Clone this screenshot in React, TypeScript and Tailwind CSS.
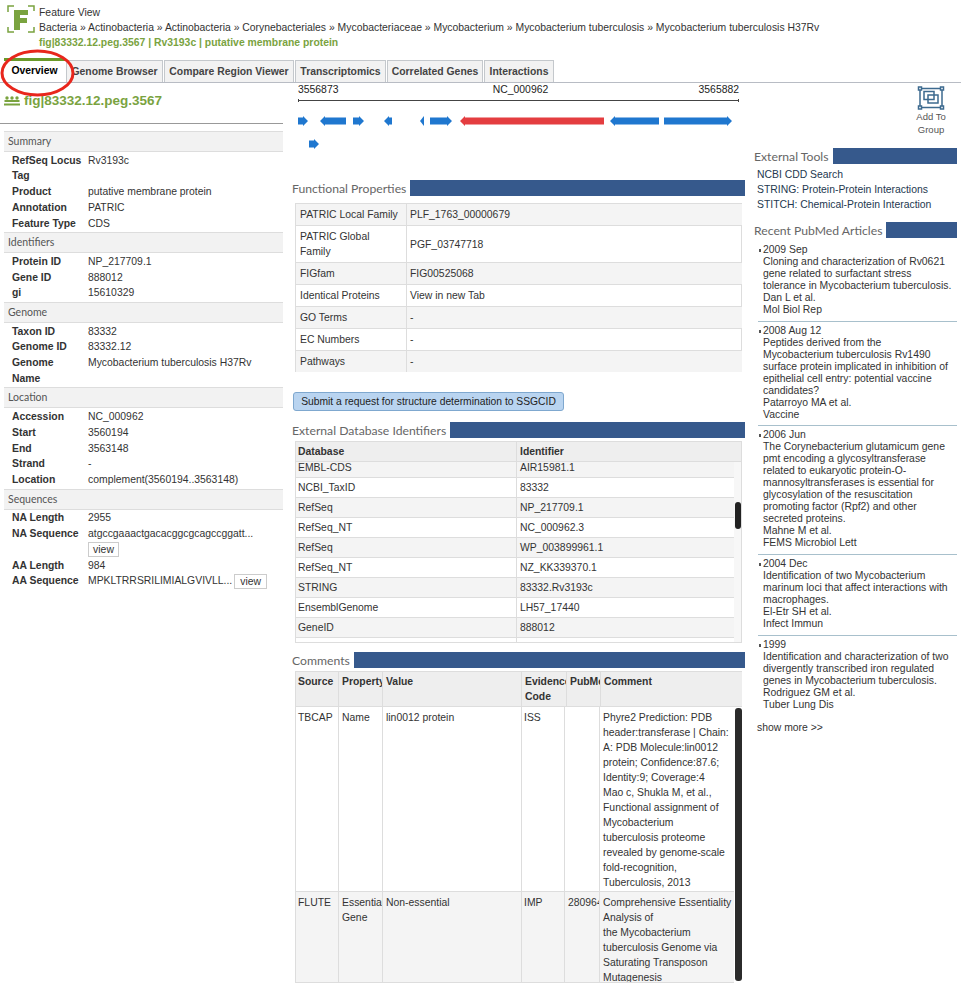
const sans = "font-['Liberation_Sans',Arial,sans-serif]"

// Section label followed by the blue bar that fills the rest of the row
function Heading({ title, className = "" }: { title: string; className?: string }) {
    return (
        <div className={`flex items-stretch h-4 gap-[4px] ${className}`}>
            <span className="pl-[2px] font-['Lato',sans-serif] text-[12.2px] leading-[17px] text-[#666] whitespace-nowrap">{title}</span>
            <div className="flex-1 bg-[#36598c]" />
        </div>
    )
}

const summary: { title: string; rows: [string, string][] }[] = [
    {
        title: "Summary",
        rows: [
            ["RefSeq Locus Tag", "Rv3193c"],
            ["Product", "putative membrane protein"],
            ["Annotation", "PATRIC"],
            ["Feature Type", "CDS"],
        ],
    },
    {
        title: "Identifiers",
        rows: [
            ["Protein ID", "NP_217709.1"],
            ["Gene ID", "888012"],
            ["gi", "15610329"],
        ],
    },
    {
        title: "Genome",
        rows: [
            ["Taxon ID", "83332"],
            ["Genome ID", "83332.12"],
            ["Genome Name", "Mycobacterium tuberculosis H37Rv"],
        ],
    },
    {
        title: "Location",
        rows: [
            ["Accession", "NC_000962"],
            ["Start", "3560194"],
            ["End", "3563148"],
            ["Strand", "-"],
            ["Location", "complement(3560194..3563148)"],
        ],
    },
]

function ViewButton({ className }: { className: string }) {
    return (
        <button className={`h-[15px] border border-[#ccc] bg-white text-[10.4px] leading-[13px] text-[#333] ${className}`}>
            view
        </button>
    )
}

function SectionBand({ title }: { title: string }) {
    return (
        <div className="h-[21px] bg-[#f2f2f2] border-y border-[#ddd] pl-[4px] font-['Lato',sans-serif] text-[10.5px] leading-[19px] text-[#555]">
            {title}
        </div>
    )
}

function Row({ k, v }: { k: string; v: string }) {
    return (
        <div className="flex text-[10.4px] leading-[15.75px] text-[#333]">
            <dt className="w-[84px] pl-2 shrink-0 font-bold pr-1">{k}</dt>
            <dd className="whitespace-nowrap">{v}</dd>
        </div>
    )
}

function LeftPanel() {
    return (
        <aside className="w-[279px] shrink-0 ml-1">
            <div className="flex items-center h-[41px] border-b border-[#999] pb-[4px] -ml-1 w-[283px] pl-1 gap-[4px]">
                <svg width="16" height="10" viewBox="0 0 16 10" className="text-[#7aa33f]" fill="currentColor">
                    <circle cx="3" cy="2" r="1.7" />
                    <circle cx="8" cy="2" r="1.7" />
                    <circle cx="13" cy="2" r="1.7" />
                    <rect x="0.5" y="4" width="15" height="2" />
                    <rect x="0" y="7.5" width="16" height="2" />
                </svg>
                <span className="text-[13.5px] font-bold text-[#7aa33f]">fig|83332.12.peg.3567</span>
            </div>
            <div className="mt-[7px]">
                {summary.map(s => (
                    <section key={s.title}>
                        <SectionBand title={s.title} />
                        <dl className="pt-[0.6px] pb-[0.9px]">
                            {s.rows.map(([k, v]) => (
                                <Row key={k} k={k} v={v} />
                            ))}
                        </dl>
                    </section>
                ))}
                <SectionBand title="Sequences" />
                <dl className="pt-[0.6px]">
                    <Row k="NA Length" v="2955" />
                    <Row k="NA Sequence" v="atgccgaaactgacacggcgcagccggatt..." />
                    <div className="pl-[84px] h-[15.75px] flex items-center">
                        <ViewButton className="w-[31px]" />
                    </div>
                    <Row k="AA Length" v="984" />
                    <div className="flex items-center text-[10.4px] leading-[15.75px] text-[#333]">
                        <div className="w-[84px] pl-2 shrink-0 font-bold">AA Sequence</div>
                        <div className="whitespace-nowrap mr-[2px]">MPKLTRRSRILIMIALGVIVLL...</div>
                        <ViewButton className="w-[33px]" />
                    </div>
                </dl>
            </div>
        </aside>
    )
}

// Gene arrows on the compare region track, x and width measured from the track's left edge
const arrows: { l: number; w: number; dir: "r" | "l"; red?: boolean }[] = [
    { l: 0, w: 10, dir: "r" },
    { l: 22, w: 26, dir: "l" },
    { l: 55, w: 11, dir: "r" },
    { l: 86, w: 8, dir: "l" },
    { l: 122, w: 4, dir: "l" },
    { l: 132, w: 22, dir: "r" },
    { l: 162, w: 144, dir: "l", red: true },
    { l: 312, w: 49, dir: "l" },
    { l: 366, w: 68, dir: "r" },
]

function Track() {
    return (
        <div className="ml-[8px] mr-[6px]">
            <div className="flex justify-between text-[10.4px] leading-3 text-[#222] h-3 mt-[1px]">
                <span>3556873</span>
                <span className="translate-x-[2px]">NC_000962</span>
                <span>3565882</span>
            </div>
            <div className="mt-[3px] h-[3px] border-x border-[#444] flex items-center">
                <div className="h-px w-full bg-[#444]" />
            </div>
            <svg width="440" height="48" viewBox="0 0 440 48" className="mt-[13px] block">
                {arrows.map(a => {
                    const h = 3.5
                    const head = Math.min(5, a.w)
                    const y = 6
                    const pts =
                        a.dir === "r"
                            ? `${a.l},${y - h} ${a.l + a.w - head},${y - h} ${a.l + a.w - head},${y - 5} ${a.l + a.w},${y} ${a.l + a.w - head},${y + 5} ${a.l + a.w - head},${y + h} ${a.l},${y + h}`
                            : `${a.l + a.w},${y - h} ${a.l + head},${y - h} ${a.l + head},${y - 5} ${a.l},${y} ${a.l + head},${y + 5} ${a.l + head},${y + h} ${a.l + a.w},${y + h}`
                    return <polygon key={a.l} points={pts} fill={a.red ? "#e43d40" : "#1f77cf"} />
                })}
                <polygon points="11,25.5 16,25.5 16,24 21,29 16,34 16,32.5 11,32.5" fill="#1f77cf" />
            </svg>
        </div>
    )
}

const functional: [string, string][] = [
    ["PATRIC Local Family", "PLF_1763_00000679"],
    ["PATRIC Global Family", "PGF_03747718"],
    ["FIGfam", "FIG00525068"],
    ["Identical Proteins", "View in new Tab"],
    ["GO Terms", "-"],
    ["EC Numbers", "-"],
    ["Pathways", "-"],
]

const dbRows: [string, string][] = [
    ["NCBI_TaxID", "83332"],
    ["RefSeq", "NP_217709.1"],
    ["RefSeq_NT", "NC_000962.3"],
    ["RefSeq", "WP_003899961.1"],
    ["RefSeq_NT", "NZ_KK339370.1"],
    ["STRING", "83332.Rv3193c"],
    ["EnsemblGenome", "LH57_17440"],
    ["GeneID", "888012"],
]

function FunctionalTable() {
    return (
        <table className="ml-[5px] w-[447px] mt-[7px] border-collapse table-fixed text-[10.4px] leading-[15px] text-[#333]">
            <tbody>
                {functional.map(([k, v], i) => (
                    <tr key={k} className={i % 2 === 0 ? "bg-[#f4f4f4]" : "bg-white"}>
                        <td className="w-[111px] px-[4px] py-[3px] align-middle border-t border-x border-[#ddd]">{k}</td>
                        <td className={`pl-[3px] pr-[4px] py-[3px] align-middle border-t border-[#ddd] ${i % 2 === 1 ? "border-x border-b" : ""}`}>{v}</td>
                    </tr>
                ))}
            </tbody>
        </table>
    )
}

function DbTable() {
    return (
        <div className="relative ml-[5px] mr-[3px] mt-[3px] h-[202px] border border-[#ddd] overflow-hidden text-[10.4px] text-[#333]">
            <div className="flex h-[20px] bg-[#eee] border-b border-[#ddd] font-bold leading-[19px]">
                <div className="w-[221px] pl-[2px] border-r border-[#ddd]">Database</div>
                <div className="pl-[3px]">Identifier</div>
            </div>
            <div className="flex h-[16px] bg-[#f4f4f4] border-b border-[#ddd] leading-[12px]">
                <div className="w-[221px] pl-[2px] border-r border-[#ddd]">EMBL-CDS</div>
                <div className="pl-[3px]">AIR15981.1</div>
            </div>
            {dbRows.map(([k, v], i) => (
                <div
                    key={k + v}
                    className={`flex h-[20px] border-b border-[#ddd] leading-[19px] ${i % 2 === 0 ? "bg-white" : "bg-[#f4f4f4]"}`}
                >
                    <div className="w-[221px] pl-[2px] border-r border-[#ddd]">{k}</div>
                    <div className="pl-[3px]">{v}</div>
                </div>
            ))}
            <div className="flex h-[20px]">
                <div className="w-[221px] border-r border-[#ddd]" />
            </div>
            <div className="absolute right-0 top-[20px] bottom-0 w-[7px] bg-[#f7f7f7]">
                <div className="absolute top-[40px] right-0 w-[6px] h-[27px] rounded-[3px] bg-[#222]" />
            </div>
        </div>
    )
}

const commentCols = ["w-[43px]", "w-[44px]", "w-[139px]", "w-[43px]", "w-[35px]", "flex-1"]
const commentPad = ["pl-[2px]", "pl-[3px]", "pl-[3px]", "pl-[2px]", "pl-[3px]", "pl-[3px]"]

function CommentRow({ cells, bg }: { cells: React.ReactNode[]; bg: string }) {
    return (
        <div className={`flex border-b border-[#ddd] ${bg}`}>
            {cells.map((c, i) => (
                <div
                    key={i}
                    className={`${commentCols[i]} ${commentPad[i]} ${i < 5 ? "border-r border-[#ddd]" : ""} pt-[3px] overflow-hidden`}
                >
                    {c}
                </div>
            ))}
        </div>
    )
}

function CommentsTable() {
    return (
        <div className="relative ml-[5px] mr-[3px] mt-[3px] border-l border-[#ddd] text-[10.4px] leading-[15px] text-[#333]">
            <div className="flex h-[36px] bg-[#eee] border-y border-[#ddd] font-bold">
                <div className="w-[43px] pl-[2px] pt-[2px] border-r border-[#ddd]">Source</div>
                <div className="w-[44px] pl-[3px] pt-[2px] border-r border-[#ddd] overflow-hidden whitespace-nowrap">Property</div>
                <div className="w-[139px] pl-[3px] pt-[2px] border-r border-[#ddd]">Value</div>
                <div className="w-[45px] pl-[3px] pt-[2px] border-r border-[#ddd] overflow-hidden">
                    <span className="whitespace-nowrap">Evidence</span>
                    <br />
                    Code
                </div>
                <div className="w-[34px] pl-[3px] pt-[2px] border-r border-[#ddd] overflow-hidden whitespace-nowrap">PubMed</div>
                <div className="flex-1 pl-[3px] pt-[2px]">Comment</div>
            </div>
            <div className="pr-[8px]">
                <CommentRow
                    bg="bg-white"
                    cells={[
                        "TBCAP",
                        "Name",
                        "lin0012 protein",
                        "ISS",
                        "",
                        <div key="c" className="h-[181px]">
                            Phyre2 Prediction: PDB
                            <br />
                            header:transferase | Chain:
                            <br />
                            A: PDB Molecule:lin0012
                            <br />
                            protein; Confidence:87.6;
                            <br />
                            Identity:9; Coverage:4
                            <br />
                            Mao c, Shukla M, et al.,
                            <br />
                            Functional assignment of
                            <br />
                            Mycobacterium
                            <br />
                            tuberculosis proteome
                            <br />
                            revealed by genome-scale
                            <br />
                            fold-recognition,
                            <br />
                            Tuberculosis, 2013
                        </div>,
                    ]}
                />
                <CommentRow
                    bg="bg-[#f4f4f4]"
                    cells={[
                        "FLUTE",
                        <div key="e" className="whitespace-nowrap">
                            Essential
                            <br />
                            Gene
                        </div>,
                        "Non-essential",
                        "IMP",
                        <span key="p" className="whitespace-nowrap">
                            28096490
                        </span>,
                        <div key="d" className="h-[87px] whitespace-nowrap">
                            Comprehensive Essentiality
                            <br />
                            Analysis of
                            <br />
                            the Mycobacterium
                            <br />
                            tuberculosis Genome via
                            <br />
                            Saturating Transposon
                            <br />
                            Mutagenesis
                        </div>,
                    ]}
                />
            </div>
            <div className="absolute right-0 top-[37px] bottom-[2px] w-[7px] rounded-[3px] bg-[#2b2b2b]" />
        </div>
    )
}

const articles: { date: string; title: string; author: string; journal: string }[] = [
    {
        date: "2009 Sep",
        title: "Cloning and characterization of Rv0621 gene related to surfactant stress tolerance in Mycobacterium tuberculosis.",
        author: "Dan L et al.",
        journal: "Mol Biol Rep",
    },
    {
        date: "2008 Aug 12",
        title: "Peptides derived from the Mycobacterium tuberculosis Rv1490 surface protein implicated in inhibition of epithelial cell entry: potential vaccine candidates?",
        author: "Patarroyo MA et al.",
        journal: "Vaccine",
    },
    {
        date: "2006 Jun",
        title: "The Corynebacterium glutamicum gene pmt encoding a glycosyltransferase related to eukaryotic protein-O-mannosyltransferases is essential for glycosylation of the resuscitation promoting factor (Rpf2) and other secreted proteins.",
        author: "Mahne M et al.",
        journal: "FEMS Microbiol Lett",
    },
    {
        date: "2004 Dec",
        title: "Identification of two Mycobacterium marinum loci that affect interactions with macrophages.",
        author: "El-Etr SH et al.",
        journal: "Infect Immun",
    },
    {
        date: "1999",
        title: "Identification and characterization of two divergently transcribed iron regulated genes in Mycobacterium tuberculosis.",
        author: "Rodriguez GM et al.",
        journal: "Tuber Lung Dis",
    },
]

function RightPanel() {
    return (
        <aside className="w-[204px] shrink-0 ml-[8px] text-[10.4px] text-[#333]">
            <div className="flex flex-col items-center w-[40px] ml-[158px] mt-[3px] text-[#555] text-[9.5px] leading-[13px]">
                <svg width="28" height="24" viewBox="0 0 28 24" fill="none" stroke="#3d6a8f" strokeWidth="1.5">
                    <rect x="3" y="2.5" width="22" height="19" />
                    <rect x="7" y="5.5" width="10" height="8" />
                    <rect x="11" y="9" width="10" height="8" />
                    <rect x="1.5" y="1" width="3" height="3" fill="#fff" />
                    <rect x="23.5" y="1" width="3" height="3" fill="#fff" />
                    <rect x="1.5" y="20" width="3" height="3" fill="#fff" />
                    <rect x="23.5" y="20" width="3" height="3" fill="#fff" />
                </svg>
                <span>Add To</span>
                <span>Group</span>
            </div>
            <Heading title="External Tools" className="mt-[12px] -ml-[1px]" />
            <div className="mt-[3px] pl-[4px] text-[#24384f] leading-[15px]">
                <div>NCBI CDD Search</div>
                <div>STRING: Protein-Protein Interactions</div>
                <div>STITCH: Chemical-Protein Interaction</div>
            </div>
            <Heading title="Recent PubMed Articles" className="mt-[10px] -ml-[1px]" />
            <div className="mt-[6px] leading-[12px]">
                {articles.map((a, i) => (
                    <div
                        key={a.date}
                        className={`relative ml-[5px] pl-[5px] pr-[5px] ${i < articles.length - 1 ? "pb-[4.5px] mb-[3.2px] border-b border-[#a8c0cc]" : ""}`}
                    >
                        <span className="absolute left-[1px] top-[5px] w-[2px] h-[3px] bg-[#555]" />
                        <div>{a.date}</div>
                        <div>{a.title}</div>
                        <div>{a.author}</div>
                        <div>{a.journal}</div>
                    </div>
                ))}
            </div>
            <div className="mt-[11px] pl-[4px] leading-3">show more &gt;&gt;</div>
        </aside>
    )
}

const tabs = [
    { label: "Overview", w: "w-[61px]" },
    { label: "Genome Browser", w: "w-[97px]" },
    { label: "Compare Region Viewer", w: "w-[130px]" },
    { label: "Transcriptomics", w: "w-[91px]" },
    { label: "Correlated Genes", w: "w-[96px]" },
    { label: "Interactions", w: "w-[70px]" },
]

export default function App() {
    return (
        <div className={`relative w-[961px] h-[991px] overflow-hidden bg-white ${sans}`}>
            {/* Page header */}
            <header className="flex h-[59px] pl-[7px] pt-[5px]">
                <svg width="28" height="28" viewBox="0 0 28 28" className="shrink-0" fill="none">
                    <path d="M1 7V1H7M21 1H27V6M1 22V27H7M21 27H27V22" stroke="#7aa33f" strokeWidth="1.5" />
                    <path d="M7 5H21V10H13V13H20V18H13V25H7Z" fill="#7aa33f" />
                </svg>
                <div className="ml-[4px] text-[10.4px] leading-[15px] text-[#333]">
                    <div>Feature View</div>
                    <div className="whitespace-nowrap">
                        Bacteria » Actinobacteria » Actinobacteria » Corynebacteriales » Mycobacteriaceae » Mycobacterium » Mycobacterium tuberculosis » Mycobacterium tuberculosis H37Rv
                    </div>
                    <div className="font-bold text-[#7aa33f]">fig|83332.12.peg.3567 | Rv3193c | putative membrane protein</div>
                </div>
            </header>

            {/* Tab strip */}
            <nav className="flex items-end h-[24px] pl-[4px] gap-[1px] border-b border-[#b8bcc4]">
                {tabs.map((t, i) => (
                    <div
                        key={t.label}
                        className={`${t.w} text-center text-[10.4px] font-bold whitespace-nowrap ${
                            i === 0
                                ? "h-[24px] leading-[20px] bg-white border-t-[3px] border-[#6a9a2a] text-black"
                                : "h-[22px] leading-[21px] bg-[#f2f2f2] border border-b-0 border-[#c4c8cc] text-[#444]"
                        }`}
                    >
                        {t.label}
                    </div>
                ))}
            </nav>

            <div className="flex">
                <LeftPanel />
                <main className="w-[455px] shrink-0 ml-[7px]">
                    <Track />
                    <Heading title="Functional Properties" className="mt-[17px]" />
                    <FunctionalTable />
                    <button className="ml-[3px] mt-[20px] h-[19px] w-[271px] block rounded-[3px] border border-[#7fa8cf] bg-[#b9d4f0] text-[10.3px] leading-[17px] text-[#222]">
                        Submit a request for structure determination to SSGCID
                    </button>
                    <Heading title="External Database Identifiers" className="mt-[11px]" />
                    <DbTable />
                    <Heading title="Comments" className="mt-[9px]" />
                    <CommentsTable />
                </main>
                <RightPanel />
            </div>

            {/* Red hand-drawn circle around the Overview tab */}
            <svg width="76" height="48" viewBox="0 0 76 48" className="absolute left-0 top-[49px]" fill="none">
                <ellipse cx="37.5" cy="24" rx="35.5" ry="22" stroke="#e8261c" strokeWidth="3" />
            </svg>
        </div>
    )
}
